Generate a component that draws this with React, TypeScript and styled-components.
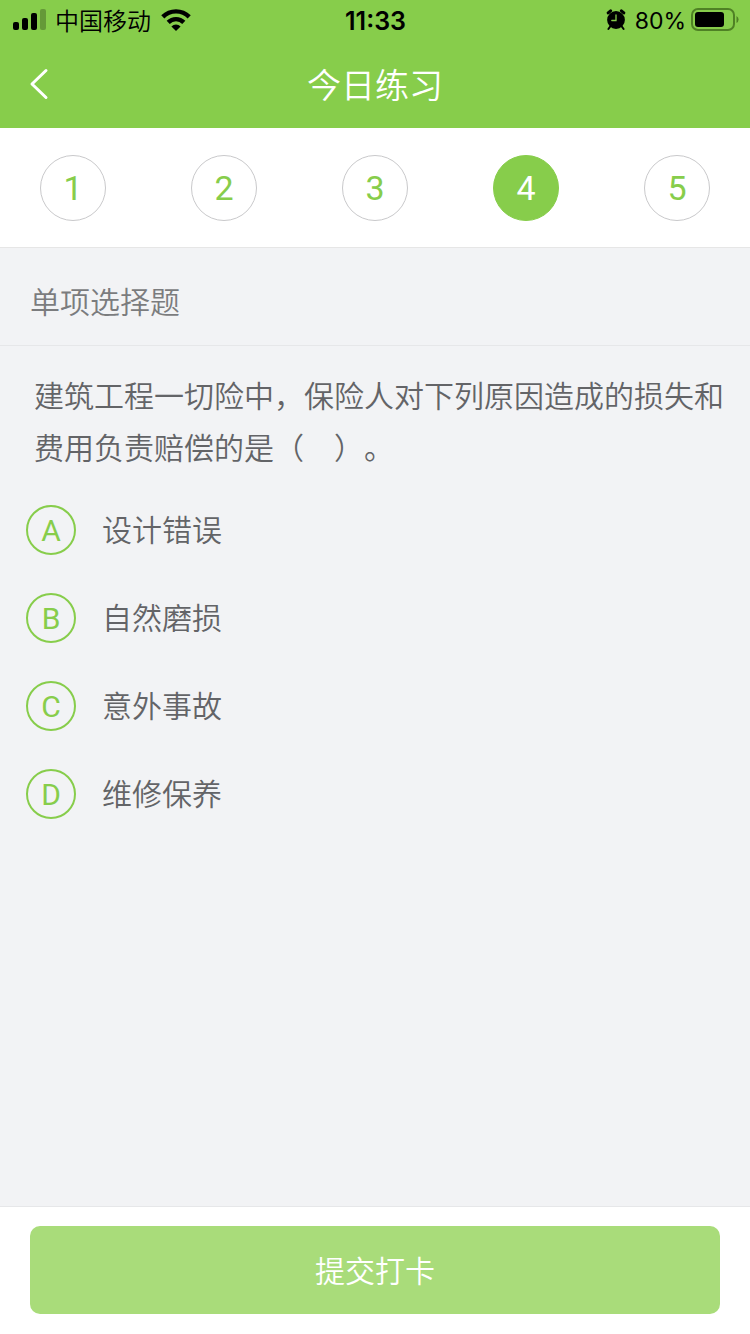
import React, { useState } from 'react';
import styled, { createGlobalStyle, css } from 'styled-components';

const GREEN = '#87cd4b';
const INK = '#636467';

const GlobalStyle = createGlobalStyle`
  *, *::before, *::after { box-sizing: border-box; }
  body {
    margin: 0;
    background: #f2f3f5;
    font-family: Roboto, "Noto Sans CJK SC", sans-serif;
    font-weight: 350;
    text-spacing-trim: space-all;
  }
  button { font-family: inherit; font-weight: inherit; cursor: pointer; }
`;

const Page = styled.div`
  display: flex;
  flex-direction: column;
  min-height: 100vh;
`;

const Header = styled.header`
  background: ${GREEN};
`;

const StatusBar = styled.div`
  display: grid;
  grid-template-columns: 1fr auto 1fr;
  align-items: center;
  height: 40px;
  padding: 0 11px 0 12px;
  color: #000;
  font-family: Inter, "Noto Sans CJK SC", sans-serif;
  font-size: 24px;
  line-height: 36px;
`;

const StatusGroup = styled.div<{ $end?: boolean }>`
  display: flex;
  align-items: center;
  justify-content: ${(p) => (p.$end ? 'flex-end' : 'flex-start')};
  gap: ${(p) => (p.$end ? '5px' : '9px')};
  svg { flex: none; }
`;

const Carrier = styled.span`
  padding-top: 4px;
`;

const Percent = styled.span`
  padding: 2px 0 0 4px;
  font-size: 23px;
  font-weight: 400;
`;

const Clock = styled.time`
  padding-top: 2px;
  font-size: 25px;
  font-weight: 600;
`;

const NavBar = styled.div`
  display: grid;
  grid-template-columns: 80px 1fr 80px;
  align-items: center;
  height: 88px;
`;

const BackButton = styled.button`
  display: flex;
  align-items: center;
  height: 88px;
  padding: 0 0 0 28px;
  border: 0;
  background: none;
`;

const Title = styled.h1`
  margin: 0;
  padding-top: 4px;
  color: #fff;
  font-size: 34px;
  font-weight: inherit;
  line-height: 84px;
  text-align: center;
`;

const Steps = styled.nav`
  display: flex;
  align-items: center;
  justify-content: space-between;
  height: 120px;
  padding: 0 40px;
  border-bottom: 1px solid #e6e6e6;
  background: #fff;
`;

const Step = styled.button<{ $active: boolean }>`
  width: 66px;
  height: 66px;
  padding: 0;
  border: 1px solid #c9c9cb;
  border-radius: 50%;
  background: #fff;
  color: ${GREEN};
  font-size: 34px;
  font-weight: 400;
  line-height: 64px;
  ${(p) =>
    p.$active &&
    css`
      border-color: ${GREEN};
      background: ${GREEN};
      color: #fff;
    `}
`;

const Main = styled.main`
  flex: 1;
`;

const Kind = styled.h2`
  margin: 0;
  padding: 30px 30px 18px;
  border-bottom: 1px solid #e6e7e9;
  color: #7b7c7e;
  font-size: 30px;
  font-weight: inherit;
  line-height: 49px;
`;

const Question = styled.fieldset`
  min-width: 0;
  margin: 0;
  padding: 0;
  border: 0;
`;

const Prompt = styled.legend`
  padding: 25px 26px 11px 34px;
  color: ${INK};
  font-size: 30px;
  line-height: 52px;
`;

const Option = styled.label`
  display: flex;
  align-items: center;
  gap: 26px;
  height: 88px;
  padding: 0 26px;
  color: ${INK};
  font-size: 30px;
  line-height: 44px;
  cursor: pointer;
`;

const OptionText = styled.span`
  padding-top: 2px;
`;

const Radio = styled.input`
  position: absolute;
  opacity: 0;
  pointer-events: none;
`;

const Letter = styled.span`
  flex: none;
  width: 50px;
  height: 50px;
  border: 2px solid ${GREEN};
  border-radius: 50%;
  color: ${GREEN};
  font-size: 30px;
  font-weight: 400;
  line-height: 48px;
  text-align: center;
  ${Radio}:checked + & {
    background: ${GREEN};
    color: #fff;
  }
`;

const Footer = styled.footer`
  padding: 19px 30px 20px;
  border-top: 1px solid #e6e7e9;
  background: #fff;
`;

const Submit = styled.button`
  display: block;
  width: 100%;
  height: 88px;
  padding: 4px 0 0;
  border: 0;
  border-radius: 10px;
  background: #a9dc7a;
  color: #fff;
  font-size: 30px;
  line-height: 84px;
`;

const SignalIcon = () => (
  <svg width="34" height="22" viewBox="0 0 34 22" aria-hidden="true">
    <rect x="1" y="13" width="6" height="8" rx="2" />
    <rect x="10" y="9" width="6" height="12" rx="2" />
    <rect x="19" y="4" width="6" height="17" rx="2" />
    <rect x="28" y="0" width="6" height="21" rx="2" opacity="0.25" />
  </svg>
);

const WifiIcon = () => (
  <svg width="32" height="24" viewBox="0 0 32 24" aria-hidden="true">
    <g fill="none" stroke="#000" strokeWidth="4.4">
      <path d="M2.8 8.9a18.6 18.6 0 0 1 26.4 0" />
      <path d="M8.2 14.4a11 11 0 0 1 15.6 0" />
    </g>
    <path d="M16 23l-4.6-4.6a6.5 6.5 0 0 1 9.2 0z" />
  </svg>
);

const AlarmIcon = () => (
  <svg width="20" height="22" viewBox="0 0 20 22" aria-hidden="true">
    <circle cx="10" cy="11" r="8.9" />
    <path d="M2.2 3.9l2.4-2.1M17.8 3.9l-2.4-2.1" stroke="#000" strokeWidth="3" strokeLinecap="round" />
    <path d="M4.2 17.5l-1.8 2.5M15.8 17.5l1.8 2.5" stroke="#000" strokeWidth="2" strokeLinecap="round" />
    <path d="M10 6v5.5H5.8" fill="none" stroke={GREEN} strokeWidth="1.3" strokeLinecap="round" />
  </svg>
);

const BatteryIcon = () => (
  <svg width="48" height="24" viewBox="0 0 48 24" aria-hidden="true">
    <rect x="1" y="1" width="42" height="21" rx="6" fill="none" stroke="#4f8125" strokeWidth="2" />
    <rect x="4" y="4" width="29" height="15" rx="3" />
    <path d="M45.5 8v7a4 4 0 0 0 0-7z" fill="#4f8125" />
  </svg>
);

const BackIcon = () => (
  <svg width="22" height="32" viewBox="0 0 22 32" aria-hidden="true">
    <path d="M18 2.5L4 16l14 13.5" fill="none" stroke="#fff" strokeWidth="3" strokeLinecap="round" strokeLinejoin="round" />
  </svg>
);

const steps = [1, 2, 3, 4, 5];

const options = [
  { key: 'A', text: '设计错误' },
  { key: 'B', text: '自然磨损' },
  { key: 'C', text: '意外事故' },
  { key: 'D', text: '维修保养' },
];

export default function App() {
  const [step, setStep] = useState(4);
  const [answer, setAnswer] = useState('');

  return (
    <Page>
      <GlobalStyle />
      <Header>
        <StatusBar>
          <StatusGroup>
            <SignalIcon />
            <Carrier>中国移动</Carrier>
            <WifiIcon />
          </StatusGroup>
          <Clock>11:33</Clock>
          <StatusGroup $end>
            <AlarmIcon />
            <Percent>80%</Percent>
            <BatteryIcon />
          </StatusGroup>
        </StatusBar>
        <NavBar>
          <BackButton type="button" aria-label="返回">
            <BackIcon />
          </BackButton>
          <Title>今日练习</Title>
        </NavBar>
      </Header>
      <Steps>
        {steps.map((n) => (
          <Step key={n} type="button" $active={n === step} onClick={() => setStep(n)}>
            {n}
          </Step>
        ))}
      </Steps>
      <Main>
        <Kind>单项选择题</Kind>
        <Question>
          <Prompt>建筑工程一切险中，保险人对下列原因造成的损失和费用负责赔偿的是（　）。</Prompt>
          {options.map((o) => (
            <Option key={o.key}>
              <Radio
                type="radio"
                name="answer"
                value={o.key}
                checked={answer === o.key}
                onChange={() => setAnswer(o.key)}
              />
              <Letter>{o.key}</Letter>
              <OptionText>{o.text}</OptionText>
            </Option>
          ))}
        </Question>
      </Main>
      <Footer>
        <Submit type="button">提交打卡</Submit>
      </Footer>
    </Page>
  );
}
